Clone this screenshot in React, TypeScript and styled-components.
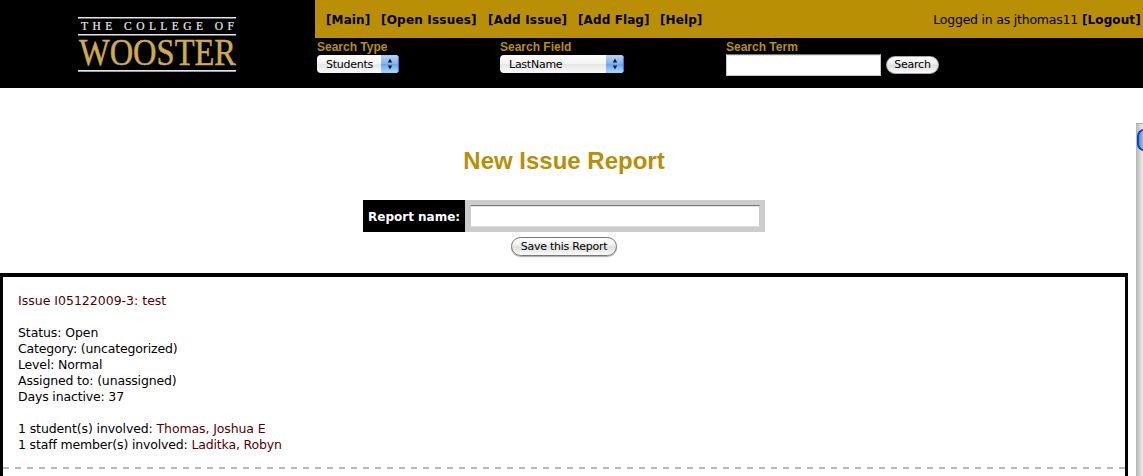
import React from 'react';
import styled, { createGlobalStyle } from 'styled-components';

const GOLD = '#b88f05';

const GlobalStyle = createGlobalStyle`
  * { box-sizing: border-box; }
  body {
    margin: 0;
    background: #fff;
    color: #000;
    font-family: Verdana, 'DejaVu Sans', sans-serif;
    font-size: 12.5px;
    line-height: 16px;
    overflow: hidden;
  }
`;

const Page = styled.div`
  display: flex;
  flex-direction: column;
  height: 476px;
  overflow: hidden;
`;

const Header = styled.header`
  display: flex;
  flex: none;
  height: 88px;
  background: #000;
`;

const Brand = styled.div`
  flex: none;
  width: 315px;
  padding-left: 77px;
`;

const LogoArt = styled.svg`
  display: block;
  overflow: visible;
`;

const HeaderMain = styled.div`
  flex: 1;
`;

const NavBar = styled.nav`
  display: flex;
  height: 38px;
  padding: 12px 3px 0 11px;
  background: ${GOLD};
  white-space: nowrap;
`;

const NavLink = styled.a<{ $width: number; $spacing?: number }>`
  flex: none;
  width: ${(p) => p.$width}px;
  font-weight: bold;
  font-size: 12px;
  letter-spacing: ${(p) => p.$spacing ?? 0.1}px;
`;

const Session = styled.div`
  display: flex;
  gap: 4px;
  margin-left: auto;
  font-size: 12.5px;
  letter-spacing: -0.22px;
`;

const SearchBar = styled.form`
  display: flex;
  padding: 3px 0 0 2px;
`;

const Field = styled.div<{ $width: number }>`
  flex: none;
  width: ${(p) => p.$width}px;
`;

const FieldLabel = styled.label`
  display: block;
  height: 13px;
  color: ${GOLD};
  font: bold 12px/13px 'Liberation Sans', Arial, sans-serif;
`;

const PopUp = styled.div<{ $width: number }>`
  display: flex;
  width: ${(p) => p.$width}px;
  height: 18px;
  margin-top: 1px;
  padding-left: 9px;
  overflow: hidden;
  border-radius: 4px;
  background: linear-gradient(#fff, #f3f3f3 48%, #e6e6e6 52%, #fafafa);
  font: 11px/19px 'Lucida Grande', 'DejaVu Sans', sans-serif;
  letter-spacing: -0.25px;
`;

const Stepper = styled.span`
  display: flex;
  align-items: center;
  justify-content: center;
  width: 18px;
  margin-left: auto;
  background: linear-gradient(#b9d7f8, #83b5ef 48%, #66a6ef 52%, #a9dfff);
  box-shadow: inset -1px 0 1px #376fc0;
`;

const SearchRow = styled.div`
  display: flex;
  gap: 5px;
`;

const TextInput = styled.input<{ $width: number; $height: number }>`
  width: ${(p) => p.$width}px;
  height: ${(p) => p.$height}px;
  padding: 0 3px;
  border: 1px solid #c8c8c8;
  border-top-color: #777;
  border-radius: 0;
  outline: none;
  background: #fff;
  box-shadow: inset 0 1px 0 #e5e5e5;
`;

const Button = styled.button<{ $width: number; $height: number }>`
  width: ${(p) => p.$width}px;
  height: ${(p) => p.$height}px;
  padding: 0;
  border: 1px solid #777;
  border-radius: 10px;
  background: linear-gradient(#fff, #eee 45%, #dedede 52%, #fbfbfb);
  color: #000;
  font: 11px/16px 'Lucida Grande', 'DejaVu Sans', sans-serif;
  letter-spacing: -0.25px;
  white-space: nowrap;
`;

const SearchButton = styled(Button)`
  margin-top: 2px;
  border-color: #aaa;
`;

const Body = styled.div`
  display: flex;
  flex: 1;
  min-height: 0;
`;

const Content = styled.main`
  display: flex;
  flex-direction: column;
  align-items: center;
  width: 1128px;
`;

const Title = styled.h1`
  margin: 57px 0 0;
  color: ${GOLD};
  font: bold 24px/32px 'Liberation Sans', Arial, sans-serif;
`;

const ReportForm = styled.div`
  display: flex;
  width: 402px;
  height: 32px;
  margin-top: 23px;
  background: #ccc;
`;

const ReportLabel = styled.label`
  width: 102px;
  margin-right: 5px;
  padding-left: 5px;
  background: #000;
  color: #fff;
  font-weight: bold;
  font-size: 12px;
  line-height: 34px;
  white-space: nowrap;
`;

const NameInput = styled(TextInput)`
  margin-top: 5px;
  border-color: #777 #ccc #ddd #ccc;
`;

const SaveButton = styled(Button)`
  margin-top: 5px;
  box-shadow: 0 1px 1px #aaa;
`;

const IssueList = styled.section`
  flex: 1;
  align-self: stretch;
  margin-top: 17px;
  border: solid #000;
  border-width: 4px 3px 0;
`;

const Issue = styled.article`
  height: 190px;
  padding: 16px 15px 0;
`;

const Line = styled.div<{ $spacing?: number }>`
  height: 16px;
  letter-spacing: ${(p) => p.$spacing ?? -0.16}px;
  white-space: nowrap;
`;

const Gap = styled.div`
  height: 16px;
`;

const Link = styled.a`
  color: #500;
`;

const Divider = styled.div`
  height: 2px;
  background: repeating-linear-gradient(90deg, #b9b9b9 0 6px, transparent 6px 12px);
`;

const ScrollTrack = styled.div`
  width: 7px;
  margin: 35px 0 0 auto;
  padding-top: 5px;
  overflow: hidden;
  border-top: 1px solid #aaa;
  background: linear-gradient(90deg, #b4b4b4, #d0d0d0 45%, #ececec);
`;

const ScrollThumb = styled.div`
  width: 15px;
  height: 22px;
  margin-left: 1px;
  border: 2px solid #1741b8;
  border-radius: 7px;
  background: linear-gradient(90deg, #4b8ce8, #a5d2fb 45%, #6faef2);
`;

function Logo() {
  return (
    <LogoArt width="230" height="88" viewBox="77 0 230 88">
      <g fill="#e4e4e4">
        <rect x="78" y="17" width="158" height="1.5" />
        <rect x="78" y="34" width="158" height="1.5" />
        <rect x="78" y="70" width="158" height="1.7" />
      </g>
      <g fontFamily="'Liberation Serif', serif">
        <text x="81" y="30" fontSize="11.5" fill="#e8e8e8" stroke="#e8e8e8" strokeWidth="0.2" textLength="153">THE COLLEGE OF</text>
        <text x="79" y="64.5" fontSize="37" fill="#cfab4c" stroke="#cfab4c" strokeWidth="0.5" textLength="157" lengthAdjust="spacingAndGlyphs">WOOSTER</text>
      </g>
    </LogoArt>
  );
}

function Select({ width, value }: { width: number; value: string }) {
  return (
    <PopUp $width={width}>
      {value}
      <Stepper>
        <svg width="6" height="12" viewBox="0 0 6 12">
          <path d="M3 .5 5.2 4.5H.8zM3 11.5.8 7.5h4.4z" fill="#10182b" />
        </svg>
      </Stepper>
    </PopUp>
  );
}

export default function App() {
  return (
    <Page>
      <GlobalStyle />
      <Header>
        <Brand><Logo /></Brand>
        <HeaderMain>
          <NavBar>
            <NavLink $width={55}>[Main]</NavLink>
            <NavLink $width={107} $spacing={0.2}>[Open Issues]</NavLink>
            <NavLink $width={90} $spacing={0.2}>[Add Issue]</NavLink>
            <NavLink $width={82}>[Add Flag]</NavLink>
            <NavLink $width={46}>[Help]</NavLink>
            <Session>
              <span>Logged in as jthomas11</span>
              <NavLink $width={58}>[Logout]</NavLink>
            </Session>
          </NavBar>
          <SearchBar>
            <Field $width={183}>
              <FieldLabel>Search Type</FieldLabel>
              <Select width={82} value="Students" />
            </Field>
            <Field $width={226}>
              <FieldLabel>Search Field</FieldLabel>
              <Select width={124} value="LastName" />
            </Field>
            <Field $width={214}>
              <FieldLabel>Search Term</FieldLabel>
              <SearchRow>
                <TextInput $width={155} $height={22} />
                <SearchButton type="button" $width={53} $height={18}>Search</SearchButton>
              </SearchRow>
            </Field>
          </SearchBar>
        </HeaderMain>
      </Header>
      <Body>
        <Content>
          <Title>New Issue Report</Title>
          <ReportForm>
            <ReportLabel>Report name:</ReportLabel>
            <NameInput $width={290} $height={22} />
          </ReportForm>
          <SaveButton type="button" $width={106} $height={19}>Save this Report</SaveButton>
          <IssueList>
            <Issue>
              <Line $spacing={0}><Link>Issue I05122009-3: test</Link></Line>
              <Gap />
              <Line $spacing={-0.1}>Status: Open</Line>
              <Line>Category: (uncategorized)</Line>
              <Line>Level: Normal</Line>
              <Line>Assigned to: (unassigned)</Line>
              <Line>Days inactive: 37</Line>
              <Gap />
              <Line $spacing={-0.11}>1 student(s) involved: <Link>Thomas, Joshua E</Link></Line>
              <Line>1 staff member(s) involved: <Link>Laditka, Robyn</Link></Line>
            </Issue>
            <Divider />
          </IssueList>
        </Content>
        <ScrollTrack><ScrollThumb /></ScrollTrack>
      </Body>
    </Page>
  );
}
